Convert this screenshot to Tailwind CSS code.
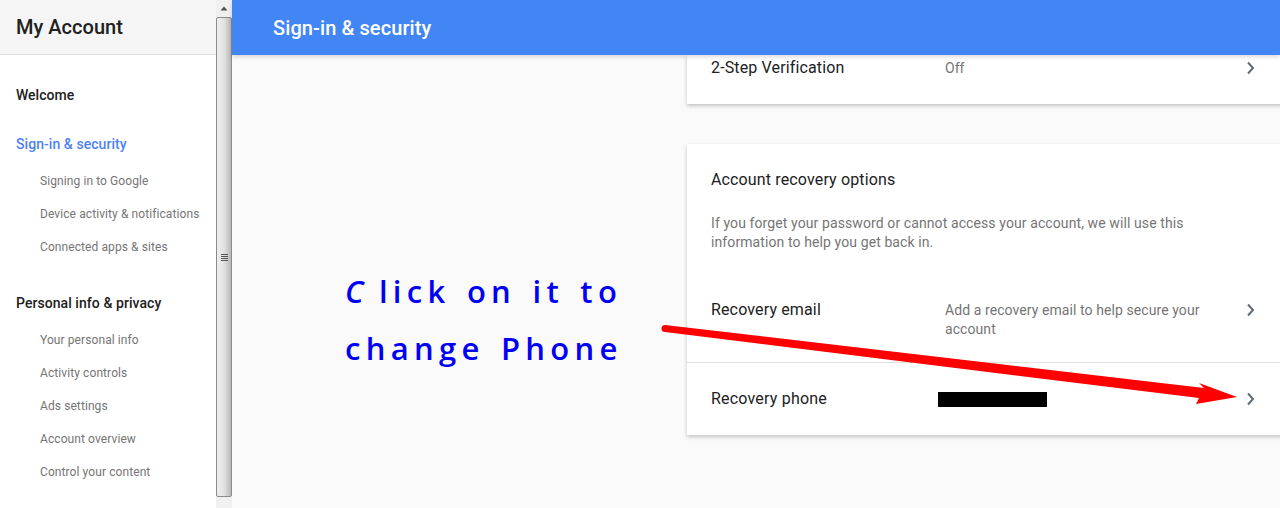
<!DOCTYPE html>
<html lang="en">
<head>
    <meta charset="UTF-8">
    <title>Sign-in &amp; security</title>
    <script src="https://cdn.jsdelivr.net/npm/@tailwindcss/browser@4"></script>
</head>
<body class="bg-[#fafafa] font-['Roboto',sans-serif] overflow-hidden">
    <div class="relative flex h-[508px] w-[1280px] overflow-hidden">
        <!-- Sidebar -->
        <aside class="flex w-[216px] shrink-0 flex-col bg-white">
            <div class="flex h-[55px] items-center border-b border-[#dcdcdc] bg-[#f5f5f5] pl-4 text-[20px] font-medium tracking-[0.02px] text-[#212121]">My Account</div>
            <nav class="flex flex-col pl-4 pt-[31px]">
                <a class="h-[18px] text-[14px] leading-[18px] font-medium text-[#212121]">Welcome</a>
                <a class="mt-[31px] h-[18px] text-[14px] leading-[18px] font-medium tracking-[0.06px] text-[#4d82f5]">Sign-in &amp; security</a>
                <div class="mt-[20px] flex flex-col gap-[17px] pl-6 text-[12px] leading-[16px] tracking-[0.09px] text-[#757575]">
                    <a>Signing in to Google</a>
                    <a>Device activity &amp; notifications</a>
                    <a>Connected apps &amp; sites</a>
                </div>
                <a class="mt-[39px] h-[18px] text-[14px] leading-[18px] font-medium tracking-[0.06px] text-[#212121]">Personal info &amp; privacy</a>
                <div class="mt-[20px] flex flex-col gap-[17px] pl-6 text-[12px] leading-[16px] tracking-[0.09px] text-[#757575]">
                    <a>Your personal info</a>
                    <a>Activity controls</a>
                    <a>Ads settings</a>
                    <a>Account overview</a>
                    <a>Control your content</a>
                </div>
            </nav>
        </aside>

        <!-- Scrollbar -->
        <div class="flex w-[16px] shrink-0 flex-col bg-[#f0f0f0]">
            <div class="flex h-[17px] items-center justify-center">
                <svg width="8" height="5" viewBox="0 0 8 5"><path d="M4 0.5 L7.5 4.5 L0.5 4.5 Z" fill="#505050"/></svg>
            </div>
            <div class="flex h-[480px] w-[16px] items-center justify-center rounded-[2px] border border-[#8a8a8a] bg-gradient-to-r from-[#eeeeee] via-[#e2e2e2] to-[#b8b8b8]">
                <div class="flex w-[7px] flex-col gap-[1px]">
                    <div class="h-px bg-[#555555]"></div>
                    <div class="h-px bg-[#555555]"></div>
                    <div class="h-px bg-[#555555]"></div>
                    <div class="h-px bg-[#555555]"></div>
                </div>
            </div>
        </div>

        <!-- Main -->
        <main class="flex min-w-0 flex-1 flex-col">
            <header class="relative z-10 flex h-[55px] shrink-0 items-center bg-[#4285f4] pl-[41px] text-[20px] font-medium tracking-[0.1px] text-white shadow-[0_2px_4px_rgba(0,0,0,0.15)]">Sign-in &amp; security</header>
            <div class="flex flex-col pl-[455px]">
                <section class="flex h-[49px] w-[620px] items-start bg-white pl-6 pt-[3px] shadow-[0_2px_4px_rgba(0,0,0,0.22)]">
                    <span class="w-[234px] text-[16px] leading-[20px] tracking-[0.14px] text-[#212121]">2-Step Verification</span>
                    <span class="text-[14px] leading-[20px] text-[#757575]">Off</span>
                    <svg class="ml-[282px] mt-[3px]" width="10" height="14" viewBox="0 0 10 14"><path d="M2 1.5 L7 7 L2 12.5" fill="none" stroke="#5f6b78" stroke-width="2"/></svg>
                </section>
                <section class="mt-[40px] h-[291px] w-[620px] bg-white shadow-[0_2px_4px_rgba(0,0,0,0.22)]">
                    <div class="px-6 pt-[26px] text-[16px] leading-[20px] tracking-[0.14px] text-[#212121]">Account recovery options</div>
                    <p class="mt-[24px] w-[500px] pl-6 text-[14px] leading-[19px] tracking-[0.1px] text-[#757575]">If you forget your password or cannot access your account, we will use this information to help you get back in.</p>
                    <div class="mt-[29px] flex h-[82px] items-start border-b border-[#e0e0e0] pl-6 pt-[19px]">
                        <span class="w-[234px] text-[16px] leading-[20px] tracking-[0.14px] text-[#212121]">Recovery email</span>
                        <span class="mt-[1px] w-[280px] text-[14px] leading-[19px] tracking-[0.08px] text-[#757575]">Add a recovery email to help secure your account</span>
                        <svg class="ml-[21px] mt-[3px]" width="10" height="14" viewBox="0 0 10 14"><path d="M2 1.5 L7 7 L2 12.5" fill="none" stroke="#5f6b78" stroke-width="2"/></svg>
                    </div>
                    <div class="flex h-[72px] items-center pl-6">
                        <span class="w-[227px] text-[16px] leading-[20px] tracking-[0.2px] text-[#212121]">Recovery phone</span>
                        <span class="h-[15px] w-[109px] bg-black"></span>
                        <svg class="ml-[199px]" width="10" height="14" viewBox="0 0 10 14"><path d="M2 1.5 L7 7 L2 12.5" fill="none" stroke="#5f6b78" stroke-width="2"/></svg>
                    </div>
                </section>
            </div>
        </main>

        <!-- Annotation drawn over the page -->
        <div class="absolute left-[345px] top-[263px] font-['Open_Sans',sans-serif] text-[31px] leading-[57px] font-semibold tracking-[5.3px] [word-spacing:3px] whitespace-nowrap text-[#0000f5]"><span class="mr-[10px] italic">C</span>lick on it to<br>change Phone</div>
        <svg class="absolute left-0 top-0" width="1280" height="508" viewBox="0 0 1280 508">
            <circle cx="665" cy="328.5" r="3.5" fill="#ff0000"/>
            <polygon points="665,325 1204,388 1199,383 1237,397 1196,404 1199,398 665,332" fill="#ff0000"/>
        </svg>
    </div>
</body>
</html>
